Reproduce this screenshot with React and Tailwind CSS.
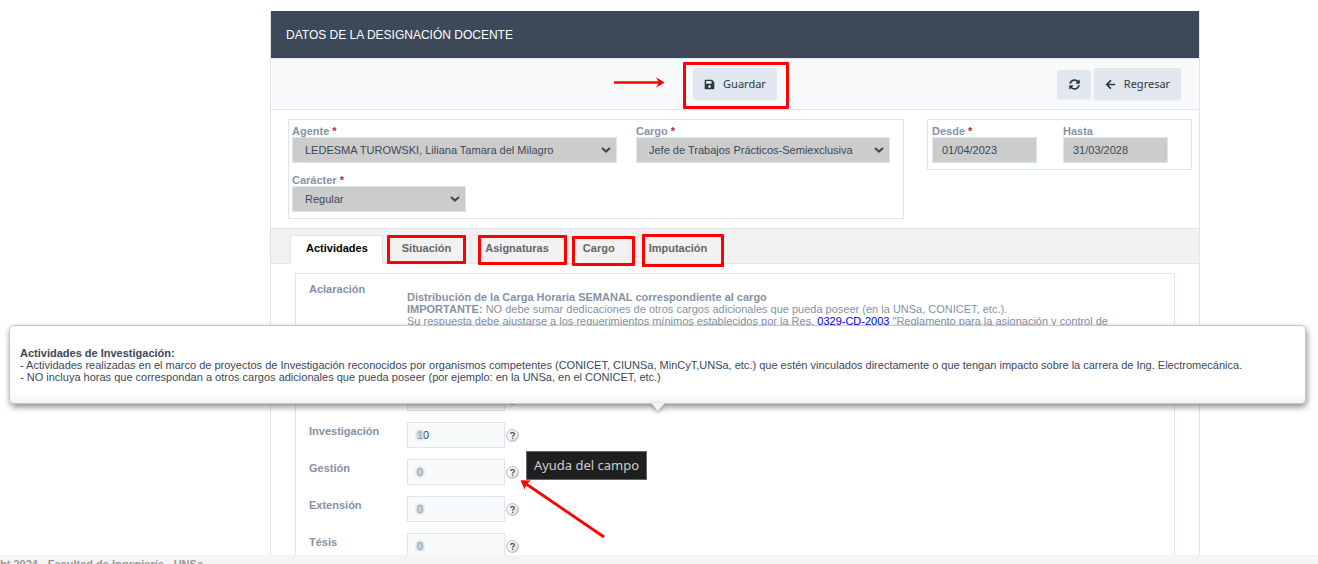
import React from "react";
import { FaSave, FaArrowLeft, FaSyncAlt } from "react-icons/fa";

const labelClass = "block text-[11px] leading-3 font-bold text-[#8592a6] whitespace-nowrap";

function SelectField({ id, label, value, className }) {
  return (
    <div className={className}>
      <label htmlFor={id} className={labelClass}>
        {label} <span className="text-[#b03050]">*</span>
      </label>
      <div className="relative">
        <select
          id={id}
          defaultValue={value}
          className="block h-[26px] w-full appearance-none border border-[#dfe5ee] bg-[#cccccc] pr-6 pl-3 text-[11px] text-[#3d4757]"
        >
          <option>{value}</option>
        </select>
        <svg viewBox="0 0 10 6" className="pointer-events-none absolute top-[10px] right-[6px] h-[6px] w-[10px]">
          <path d="M1 1 L5 4.6 L9 1" fill="none" stroke="#3d4757" strokeWidth="2" />
        </svg>
      </div>
    </div>
  );
}

function DateField({ id, label, value, required }) {
  return (
    <div className="w-[105px]">
      <label htmlFor={id} className={labelClass}>
        {label} {required && <span className="text-[#c0203f]">*</span>}
      </label>
      <input
        id={id}
        defaultValue={value}
        className="block h-[26px] w-full border border-[#dfe5ee] bg-[#cccccc] px-[9px] text-[11px] text-[#3d4757]"
      />
    </div>
  );
}

function HelpButton({ name }) {
  return (
    <button type="button" aria-label={"Ayuda: " + name} className="size-[13px]">
      <svg viewBox="0 0 13 13" className="block size-[13px]">
        <defs>
          <linearGradient id="help-fill" x1="0" y1="0" x2="1" y2="1">
            <stop offset="0" stopColor="#ffffff" />
            <stop offset="0.6" stopColor="#f0f0f0" />
            <stop offset="1" stopColor="#b8b8b8" />
          </linearGradient>
        </defs>
        <circle cx="6.5" cy="6.5" r="5.9" fill="url(#help-fill)" stroke="#b0b0b0" strokeWidth="0.9" />
        <path
          d="M4.6 5.1 C4.6 3 8.4 3 8.4 5 C8.4 6.3 6.5 6.2 6.5 7.8"
          fill="none"
          stroke="#5a5a5a"
          strokeWidth="1.3"
        />
        <rect x="5.9" y="8.7" width="1.3" height="1.3" fill="#5a5a5a" />
      </svg>
    </button>
  );
}

function HoursRow({ name, value, showLabel = true }) {
  const id = "horas-" + name;
  return (
    <div className="flex h-[37px]">
      <label htmlFor={id} className={`${labelClass} w-[98px] pt-[3px]`}>
        {showLabel && name}
      </label>
      <div className="flex h-[26px] items-center gap-px">
        <div className="relative">
          <input
            id={id}
            aria-label={name}
            defaultValue={value}
            className="block h-[26px] w-[98px] border border-[#dfe5ee] bg-[#f8fafc] px-[9px] text-[11px] text-[#2d3748]"
          />
          <span className="pointer-events-none absolute top-2 left-[9px] h-[10px] w-2 rounded-full bg-[#c3c7ce] blur-[1px] opacity-80" />
        </div>
        <HelpButton name={name} />
      </div>
    </div>
  );
}

const tabs = ["Situación", "Asignaturas", "Cargo", "Imputación"];

const toolButton =
  "flex items-center justify-center rounded-[3px] bg-[#e2e8ef] text-[11px] text-[#2d3742] shadow-xs font-['Noto_Sans',sans-serif]";

export default function App() {
  return (
    <div className="relative flex h-screen flex-col overflow-hidden bg-white font-['Liberation_Sans',Arial,sans-serif] text-[#3d4757]">
      <main className="min-h-0 flex-1 overflow-hidden pt-[11px] pr-[118px] pl-[270px]">
        <form className="min-h-full border-x border-[#dfe5ee]">
          <h1 className="flex h-[47px] items-center bg-[#3d4858] px-[15px] text-[12px] font-medium text-white">
            DATOS DE LA DESIGNACIÓN DOCENTE
          </h1>

          <div className="grid h-[52px] grid-cols-[1fr_auto_1fr] items-center border-y border-[#dfe5ee] bg-[#f8fafc]">
            <span />
            <button type="button" className={`${toolButton} h-8 w-[84px] gap-2`}>
              <FaSave className="size-[11px]" />
              Guardar
            </button>
            <div className="flex items-center justify-end gap-[3px] pr-[18px]">
              <button type="button" aria-label="Actualizar" className={`${toolButton} h-[29px] w-[34px]`}>
                <FaSyncAlt className="size-[11px]" />
              </button>
              <button type="button" className={`${toolButton} h-8 w-[87px] gap-2`}>
                <FaArrowLeft className="size-[11px]" />
                Regresar
              </button>
            </div>
          </div>

          <div className="flex h-[118px] items-start justify-between gap-[23px] pt-[9px] pr-[7px] pl-[17px]">
            <div className="h-[100px] flex-1 border border-[#dfe5ee] px-[3px] pt-[5px]">
              <div className="flex h-[49px] gap-[19px]">
                <SelectField
                  id="agente"
                  label="Agente"
                  value="LEDESMA TUROWSKI, Liliana Tamara del Milagro"
                  className="w-[325px]"
                />
                <SelectField
                  id="cargo"
                  label="Cargo"
                  value="Jefe de Trabajos Prácticos-Semiexclusiva"
                  className="w-[254px]"
                />
              </div>
              <SelectField id="caracter" label="Carácter" value="Regular" className="w-[174px]" />
            </div>
            <div className="flex h-[51px] w-[265px] gap-[26px] border border-[#dfe5ee] px-1 pt-[5px]">
              <DateField id="desde" label="Desde" value="01/04/2023" required />
              <DateField id="hasta" label="Hasta" value="31/03/2028" />
            </div>
          </div>

          <nav className="flex h-9 items-end gap-1 border-y border-[#dfe5ee] bg-[#f1f1f1] pl-[19px] text-[11px] font-bold text-[#666666]">
            <button
              type="button"
              className="-mb-px h-[29px] rounded-t-[3px] border border-b-0 border-[#dfe5ee] bg-white pr-[14px] pb-[3px] pl-[15px] text-black"
            >
              Actividades
            </button>
            {tabs.map((tab) => (
              <button
                key={tab}
                type="button"
                className="h-7 rounded-t-[3px] border border-b-0 border-[#e3e7ee] px-[14px] pb-[2px]"
              >
                {tab}
              </button>
            ))}
          </nav>

          <div className="pt-[9px] pr-6 pl-6">
            <section className="border border-[#dfe5ee] pl-[13px]">
              <div className="flex h-[111px] pt-[9px]">
                <div className={`${labelClass} w-[98px] shrink-0`}>Aclaración</div>
                <p className="pt-2 pr-4 text-[11px] leading-3 text-[#8592a6]">
                  <strong>Distribución de la Carga Horaria SEMANAL correspondiente al cargo</strong>
                  <br />
                  <strong>IMPORTANTE:</strong> NO debe sumar dedicaciones de otros cargos adicionales que pueda poseer
                  (en la UNSa, CONICET, etc.).
                  <br />
                  Su respuesta debe ajustarse a los requerimientos mínimos establecidos por la Res.{" "}
                  <a href="#reglamento" className="text-[#0000ee]">
                    0329-CD-2003
                  </a>{" "}
                  "Reglamento para la asignación y control de
                </p>
              </div>
              <HoursRow name="Docencia" value="" showLabel={false} />
              <HoursRow name="Investigación" value="10" />
              <HoursRow name="Gestión" value="0" />
              <HoursRow name="Extensión" value="0" />
              <HoursRow name="Tésis" value="0" />
            </section>
          </div>
        </form>
      </main>

      <footer className="h-[9px] shrink-0 overflow-hidden bg-[#f4f4f4] pt-[3px] text-[11px] leading-3 font-bold text-[#999999]">
        <div className="flex w-[203px] justify-end whitespace-nowrap">Copyright 2024 - Facultad de Ingeniería - UNSa</div>
      </footer>

      <div
        role="tooltip"
        className="absolute top-[325px] right-3 left-[9px] h-[79px] rounded-[5px] border border-[#c8c8c8] bg-linear-to-b from-white from-85% to-[#f2f2f2] px-[10px] pt-[21px] text-[11px] leading-3 whitespace-nowrap shadow-[1px_3px_6px_rgba(0,0,0,0.45)]"
      >
        <strong>Actividades de Investigación:</strong>
        <br />- Actividades realizadas en el marco de proyectos de Investigación reconocidos por organismos competentes
        (CONICET, CIUNSa, MinCyT,UNSa, etc.) que estén vinculados directamente o que tengan impacto sobre la carrera de
        Ing. Electromecánica.
        <br />- NO incluya horas que correspondan a otros cargos adicionales que pueda poseer (por ejemplo: en la UNSa,
        en el CONICET, etc.)
        <svg
          viewBox="0 0 14 8"
          className="absolute top-[77px] left-1/2 h-2 w-[14px] -translate-x-1/2 drop-shadow-[0_2px_2px_rgba(0,0,0,0.3)]"
        >
          <path d="M0 0 H14 L7 8 Z" fill="#f2f2f2" />
        </svg>
      </div>

      <div className="absolute top-[451px] left-[526px] flex h-[29px] w-[121px] items-center justify-center border border-[#686868] bg-[#1f1f1f] font-['Noto_Sans',sans-serif] text-[13px] whitespace-nowrap text-[#d0d0d0]">
        Ayuda del campo
      </div>

      <div className="pointer-events-none absolute inset-0">
        <div className="absolute top-[62px] left-[683px] h-[47px] w-[106px] rounded-[1px] border-3 border-[#ff0000]" />
        <div className="absolute top-[235px] left-[387px] h-[29px] w-[79px] rounded-[1px] border-3 border-[#ff0000]" />
        <div className="absolute top-[235px] left-[478px] h-[30px] w-[89px] rounded-[1px] border-3 border-[#ff0000]" />
        <div className="absolute top-[236px] left-[572px] h-[30px] w-[63px] rounded-[1px] border-3 border-[#ff0000]" />
        <div className="absolute top-[234px] left-[642px] h-[33px] w-[82px] rounded-[1px] border-3 border-[#ff0000]" />
        <svg viewBox="0 0 52 14" className="absolute top-[76px] left-[613px] h-[14px] w-[52px]">
          <path d="M1 6.5 H49" stroke="#ff0000" strokeWidth="2.6" />
          <path d="M43 1.2 L51.5 6.5 L43 11.8 L46 6.5 Z" fill="#ff0000" />
        </svg>
        <svg viewBox="0 0 88 62" className="absolute top-[478px] left-[519px] h-[62px] w-[88px]">
          <path d="M5 4.5 L85 59" stroke="#ff0000" strokeWidth="2.8" />
          <path d="M1.5 2.2 L12 2.6 L7.4 6.2 L5.6 11.6 Z" fill="#ff0000" />
        </svg>
      </div>
    </div>
  );
}
